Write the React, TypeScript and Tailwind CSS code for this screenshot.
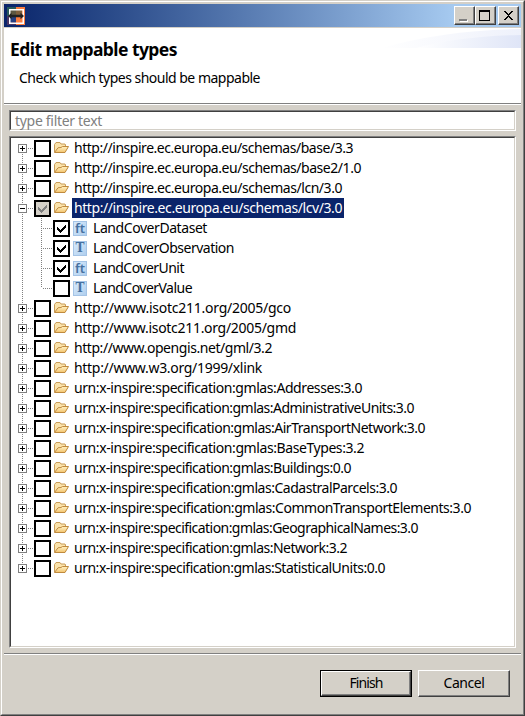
import { useLayoutEffect, useRef } from "react";

const FONT = "font-['Noto_Sans','Open_Sans',sans-serif]";

/* Text whose tracking is adjusted so that it fills the given advance width. */
function Fit({ text, width, className = "" }: { text: string; width: number; className?: string }) {
  const ref = useRef<HTMLSpanElement>(null);
  useLayoutEffect(() => {
    const el = ref.current;
    if (!el) return;
    el.style.letterSpacing = "0px";
    const natural = el.getBoundingClientRect().width;
    el.style.letterSpacing = `${(width - natural) / text.length}px`;
  }, [text, width]);
  return (
    <span ref={ref} className={`inline-block whitespace-pre ${className}`}>
      {text}
    </span>
  );
}

type Kind = "ft" | "T";
type Row = { text: string; w: number; open?: boolean; kind?: Kind; checked?: boolean };

const rows: Row[] = [
  { text: "http://inspire.ec.europa.eu/schemas/base/3.3", w: 279 },
  { text: "http://inspire.ec.europa.eu/schemas/base2/1.0", w: 287 },
  { text: "http://inspire.ec.europa.eu/schemas/lcn/3.0", w: 268 },
  { text: "http://inspire.ec.europa.eu/schemas/lcv/3.0", w: 268, open: true },
  { text: "LandCoverDataset", w: 114, kind: "ft", checked: true },
  { text: "LandCoverObservation", w: 141, kind: "T", checked: true },
  { text: "LandCoverUnit", w: 91, kind: "ft", checked: true },
  { text: "LandCoverValue", w: 99, kind: "T" },
  { text: "http://www.isotc211.org/2005/gco", w: 217 },
  { text: "http://www.isotc211.org/2005/gmd", w: 222 },
  { text: "http://www.opengis.net/gml/3.2", w: 198 },
  { text: "http://www.w3.org/1999/xlink", w: 188 },
  { text: "urn:x-inspire:specification:gmlas:Addresses:3.0", w: 288 },
  { text: "urn:x-inspire:specification:gmlas:AdministrativeUnits:3.0", w: 340 },
  { text: "urn:x-inspire:specification:gmlas:AirTransportNetwork:3.0", w: 351 },
  { text: "urn:x-inspire:specification:gmlas:BaseTypes:3.2", w: 290 },
  { text: "urn:x-inspire:specification:gmlas:Buildings:0.0", w: 277 },
  { text: "urn:x-inspire:specification:gmlas:CadastralParcels:3.0", w: 323 },
  { text: "urn:x-inspire:specification:gmlas:CommonTransportElements:3.0", w: 397 },
  { text: "urn:x-inspire:specification:gmlas:GeographicalNames:3.0", w: 344 },
  { text: "urn:x-inspire:specification:gmlas:Network:3.2", w: 273 },
  { text: "urn:x-inspire:specification:gmlas:StatisticalUnits:0.0", w: 311 },
];

function Folder() {
  return (
    <svg width="17" height="14" viewBox="0 0 17 14" className="shrink-0">
      <defs>
        <linearGradient id="flap" x1="0" y1="0" x2="0" y2="1">
          <stop offset="0" stopColor="#fff3c8" />
          <stop offset="1" stopColor="#f3c36b" />
        </linearGradient>
      </defs>
      <path d="M1.5 11V3.5L3 1.5h4l1 1.5h4l.5 1v2" fill="#fbe3ab" stroke="#c99c58" />
      <path d="M1.5 11.5 5 6.8l3-.3 1.5-1h6L12 11.5z" fill="url(#flap)" stroke="#c08a3e" strokeLinejoin="round" />
    </svg>
  );
}

function TypeIcon({ kind }: { kind: Kind }) {
  return (
    <span className="flex h-[15px] w-[14px] shrink-0 items-center justify-center overflow-hidden border border-[#a5c4e6] bg-linear-to-br from-[#d8eafb] to-[#b0cfee]">
      {kind === "ft" ? (
        <span className="font-['Noto_Sans',sans-serif] text-[13px] leading-[14px] font-semibold text-[#47719f]">ft</span>
      ) : (
        <span className="font-['DejaVu_Serif',serif] text-[12px] leading-[14px] font-bold text-[#47719f]">T</span>
      )}
    </span>
  );
}

function Check({ state }: { state: "none" | "checked" | "partial" }) {
  return (
    <span
      className={`flex size-[17px] shrink-0 items-center justify-center border-2 border-black ${
        state === "partial" ? "bg-[#d4d0c8]" : "bg-white"
      }`}
    >
      {state !== "none" && (
        <svg width="13" height="13" viewBox="0 0 13 13" shapeRendering="crispEdges">
          <path
            d="M2 5h1v1h1v1h1v1h1v-1h1v-1h1v-1h1v-1h1v-1h1v3h-1v1h-1v1h-1v1h-1v1h-1v1h-1v-1h-1v-1h-1v-1h-1z"
            fill={state === "partial" ? "#808080" : "#000"}
          />
        </svg>
      )}
    </span>
  );
}

function Gutter({ row, first, last }: { row: Row; first: boolean; last: boolean }) {
  const child = !!row.kind;
  const endChild = row.text === "LandCoverValue";
  return (
    <svg
      width={child ? 42 : 23}
      height="20"
      viewBox={`0 0 ${child ? 42 : 23} 20`}
      className="shrink-0"
      shapeRendering="crispEdges"
      stroke="#808080"
      strokeDasharray="1 1"
      fill="none"
    >
      <path d={`M11.5 ${first ? 10 : 0}V${last ? 10 : 20}`} />
      {child ? (
        <path d={`M30.5 0V${endChild ? 10 : 20}M32 10.5H42`} />
      ) : (
        <>
          <path d="M17 10.5H23" />
          <rect x="7.5" y="6.5" width="8" height="8" fill="#fff" strokeDasharray="none" />
          <path d={row.open ? "M9 10.5h5" : "M9 10.5h5M11.5 8v5"} stroke="#000" strokeDasharray="none" />
        </>
      )}
    </svg>
  );
}

function TreeRow({ row, first, last }: { row: Row; first: boolean; last: boolean }) {
  return (
    <div className="flex h-5 items-center">
      <Gutter row={row} first={first} last={last} />
      <Check state={row.open ? "partial" : row.checked ? "checked" : "none"} />
      <span className={`flex w-[21px] shrink-0 items-center ${row.kind ? "pl-[3px]" : "pl-[2px]"}`}>
        {row.kind ? <TypeIcon kind={row.kind} /> : <Folder />}
      </span>
      <span className={`flex h-5 items-center px-[2px] ${row.open ? "bg-[#0a246a] text-white" : ""}`}>
        <Fit text={row.text} width={row.w} className="leading-5" />
      </span>
    </div>
  );
}

const RAISED =
  "border border-t-white border-l-white border-r-[#404040] border-b-[#404040] bg-[#d4d0c8] shadow-[inset_-1px_-1px_0_#808080]";

function Caption({ kind }: { kind: "min" | "max" | "close" }) {
  return (
    <button className={`h-[19px] w-[21px] ${RAISED}`}>
      <svg width="19" height="17" viewBox="0 0 19 17" shapeRendering="crispEdges">
        {kind === "min" && (
          <>
            <path d="M5 14h8v1H5zM12 13h1v1h-1z" fill="#fff" />
            <path d="M4 12h8v2H4z" fill="#808080" />
          </>
        )}
        {kind === "max" && (
          <path d="M3 3h11v11H3zM4 5v8h9V5z" fill="#000" fillRule="evenodd" />
        )}
        {kind === "close" && (
          <path
            d="M5 4h2v1h1v1h1v1h1V6h1V5h1V4h2v1h-1v1h-1v1h-1v1h-1v1h1v1h1v1h1v1h1v1h-2v-1h-1v-1h-1v-1H9v1H8v1H7v1H5v-1h1v-1h1v-1h1V9h1V8H8V7H7V6H6V5H5z"
            fill="#000"
          />
        )}
      </svg>
    </button>
  );
}

function AppIcon() {
  return (
    <svg width="18" height="18" viewBox="0 0 18 18">
      <path d="M0 0h9v9H0z" fill="#285a5c" />
      <path d="M0 9h9v9H0z" fill="#493464" />
      <path d="M9 0h9v18H9z" fill="#fa7d40" />
      <path d="M3 3h6v6H3z" fill="#5d5842" />
      <path d="M3 9h6v6H3z" fill="#263f82" />
      <path d="M9 3h6v5H9z" fill="#80603c" />
      <path d="M2.75 2.75h13.5v13.5H2.75z" fill="none" stroke="#fff" strokeWidth="1.5" />
      <path d="M1 9l3.5-3.2v2h9v-2L17 9l-3.500 3.200v-2h-9v2z" fill="#222" />
    </svg>
  );
}

export default function App() {
  return (
    <div
      className={`h-[716px] w-[525px] border border-t-[#d4d0c8] border-r-[#404040] border-b-[#404040] border-l-[#d4d0c8] bg-[#d4d0c8] text-[14px] text-black ${FONT}`}
    >
      <div className="flex h-full flex-col border border-t-white border-r-[#808080] border-b-[#808080] border-l-white p-[2px]">
        <div className="flex h-[23px] shrink-0 items-center bg-linear-to-r from-[#0a246a] to-[#a6caf0] to-[87%] pr-[2px] pl-[3px]">
          <AppIcon />
          <div className="ml-auto flex">
            <Caption kind="min" />
            <Caption kind="max" />
            <div className="w-[2px]" />
            <Caption kind="close" />
          </div>
        </div>

        <header className="relative mt-px h-[75px] shrink-0 bg-white">
          <svg width="140" height="20" viewBox="0 0 140 20" className="absolute top-0 right-0">
            <defs>
              <linearGradient id="swoosh">
                <stop offset="0" stopColor="#fff" />
                <stop offset="1" stopColor="#dfe5f7" />
              </linearGradient>
              <linearGradient id="swooshTop">
                <stop offset="0" stopColor="#fff" />
                <stop offset="1" stopColor="#eef1fb" />
              </linearGradient>
            </defs>
            <path d="M0 20Q65 2 140 1V20z" fill="url(#swooshTop)" />
            <path d="M35 20Q80 8 140 7V20z" fill="url(#swoosh)" />
          </svg>
          <h1 className="relative pt-[9px] pl-[6px] text-[17.5px] leading-6 font-bold">
            <Fit text="Edit mappable types" width={167} />
          </h1>
          <p className="relative pt-[7px] pl-[15px] leading-5">
            <Fit text="Check which types should be mappable" width={241} />
          </p>
        </header>
        <div className="h-[2px] shrink-0 border-t border-[#808080] bg-white" />

        <div className="mt-[5px] mr-[5px] ml-[5px] h-[21px] shrink-0 border border-t-[#808080] border-r-white border-b-white border-l-[#808080] bg-white">
          <div className="flex h-full items-center border border-t-[#404040] border-r-[#d4d0c8] border-b-[#d4d0c8] border-l-[#404040] pl-[4px] text-[#808080]">
            <Fit text="type filter text" width={87} className="leading-[17px]" />
          </div>
        </div>

        <div className="mt-[5px] mr-[5px] ml-[5px] h-[512px] shrink-0 border border-t-[#808080] border-r-white border-b-white border-l-[#808080] bg-white">
          <div className="h-full border border-t-[#404040] border-r-[#d4d0c8] border-b-[#d4d0c8] border-l-[#404040]">
            {rows.map((row, i) => (
              <TreeRow key={row.text} row={row} first={i === 0} last={i === rows.length - 1} />
            ))}
          </div>
        </div>

        <div className="mt-[5px] h-[2px] shrink-0 border-t border-[#808080] bg-white" />

        <footer className="mt-[15px] flex justify-end gap-[6px] pr-[11px]">
          <div className="h-[27px] w-[92px] border border-black">
            <button className={`flex h-full w-full items-center justify-center pb-[2px] ${RAISED}`}>
              <Fit text="Finish" width={33} className="leading-5" />
            </button>
          </div>
          <button className={`flex h-[27px] w-[92px] items-center justify-center pb-[2px] ${RAISED}`}>
            <Fit text="Cancel" width={41} className="leading-5" />
          </button>
        </footer>
      </div>
    </div>
  );
}
